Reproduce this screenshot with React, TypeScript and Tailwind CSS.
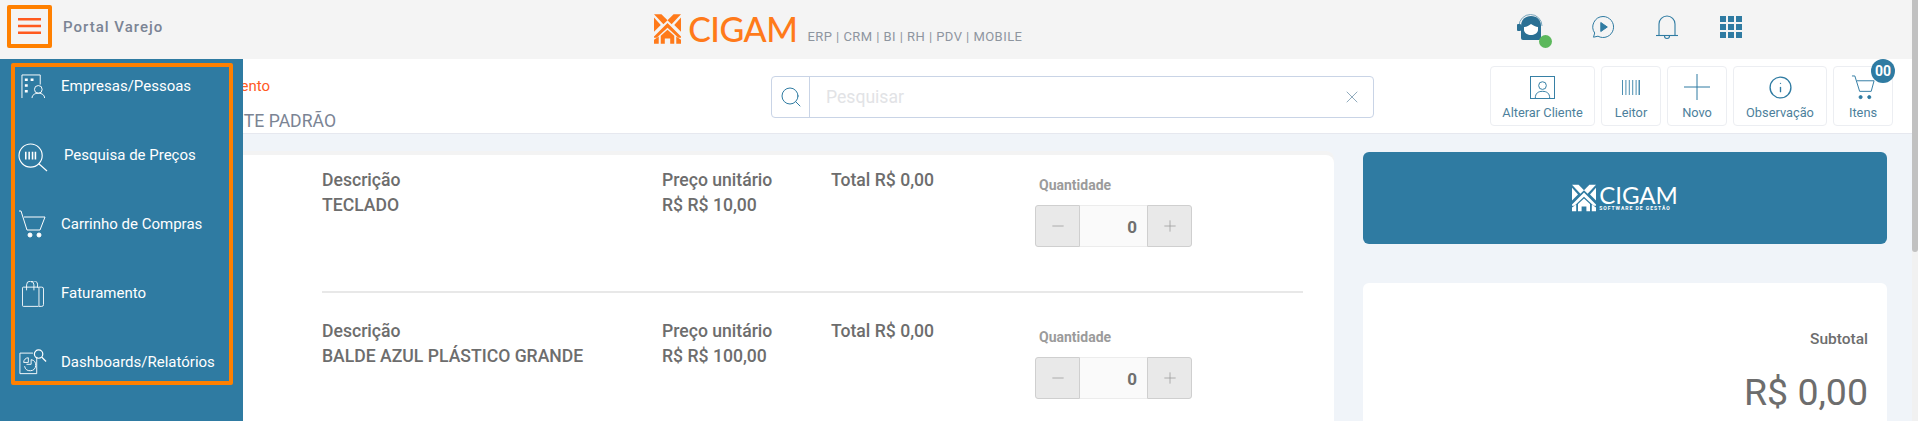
import { Info, Minus, Plus, Search, X } from 'lucide-react';

const font = 'font-["Roboto",sans-serif]';

function LogoMark({ color, className }: { color: string; className: string }) {
  return (
    <svg viewBox="0 0 40 44" className={className} fill={color}>
      <path d="M0 0h11l9 9-6 6z" />
      <path d="M40 0H29l-9 9 6 6z" />
      <path d="M0 5l10 11-10 10z" />
      <path d="M40 5L30 16l10 10z" />
      <path d="M20 13l20 20v2l-4 0L20 20 4 35H0v-2z" />
      <path d="M0 38l7-5v11H0z" />
      <path d="M40 38l-7-5v11h7z" />
      <path d="M10 32l10-9 10 9v12h-6v-8h-8v8h-6z" />
    </svg>
  );
}

function ToolButton({ label, w, icon }: { label: string; w: string; icon: React.ReactNode }) {
  return (
    <div className={`${w} h-[60px] shrink-0 rounded-[4px] border border-[#eceef2] bg-white flex flex-col items-center pt-[6px] text-[#2f7ba2]`}>
      <div className="h-[28px] flex items-center justify-center">{icon}</div>
      <span className="mt-[3px] text-[12.8px] leading-[18px] text-[#4d7f9c]">{label}</span>
    </div>
  );
}

function Stepper() {
  return (
    <div className="flex w-[157px] h-[42px]">
      <div className="w-[45px] rounded-l-[3px] border border-[#cfcfcf] bg-[#e9e9e9] flex items-center justify-center">
        <Minus size={18} strokeWidth={1} className="text-[#9a9a9a]" />
      </div>
      <div className="flex-1 border-y border-[#ececec] bg-[#fafafa] text-right pr-[10px] text-[17px] font-bold leading-[42px] text-[#6f6f6f]">0</div>
      <div className="w-[45px] rounded-r-[3px] border border-[#cfcfcf] bg-[#e9e9e9] flex items-center justify-center">
        <Plus size={18} strokeWidth={1} className="text-[#9a9a9a]" />
      </div>
    </div>
  );
}

function ProductRow({ name, price, first }: { name: string; price: string; first?: boolean }) {
  const textCls = 'text-[17.6px] font-medium leading-[25px] text-[#6d6d6d]';
  return (
    <div className={`flex ml-[322px] mr-[31px] ${first ? 'h-[138px] pt-[13px] border-b-2 border-[#e8e8e8]' : 'pt-[26px]'}`}>
      <div className={`w-[340px] ${textCls}`}>
        <div>Descrição</div>
        <div>{name}</div>
      </div>
      <div className={`w-[169px] ${textCls}`}>
        <div>Preço unitário</div>
        <div>{price}</div>
      </div>
      <div className={`w-[204px] ${textCls}`}>Total R$ 0,00</div>
      <div className={first ? '-mt-[1px]' : ''}>
        <div className="pl-[4px] pt-[10px] text-[14px] font-bold leading-[16px] text-[#9b9b9b]">Quantidade</div>
        <div className="mt-[12px]"><Stepper /></div>
      </div>
    </div>
  );
}

function MenuItem({ label, icon, shift }: { label: string; icon: React.ReactNode; shift?: boolean }) {
  return (
    <div className="flex items-center h-[69px] text-white">
      <div className="w-[36px] flex justify-center shrink-0">{icon}</div>
      <span className={`${shift ? 'ml-[13px]' : 'ml-[10px]'} text-[15px] leading-[20px]`}>{label}</span>
    </div>
  );
}

export default function App() {
  return (
    <div className={`relative h-[421px] w-[1918px] overflow-hidden bg-[#f0f4f9] ${font}`}>
      {/* top bar */}
      <header className="h-[59px] bg-[#f4f4f4] flex items-center relative">
        <div className="ml-[7px] mb-[7px] w-[45px] h-[43px] rounded-[2px] border-[4px] border-[#ff8000] flex items-center justify-center">
          <svg width="23" height="16" viewBox="0 0 23 16" stroke="#ff5a1f" strokeWidth="2.4"><path d="M0 1.2h23M0 8h23M0 14.8h23" /></svg>
        </div>
        <span className="ml-[11px] mb-[5px] text-[15px] font-medium tracking-[1px] text-[#7b8494]">Portal Varejo</span>

        <div className="ml-[491px] flex items-end mb-[2px]">
          <LogoMark color="#ff7a1a" className="w-[27px] h-[30px]" />
          <span className='ml-[7px] font-["Lato",sans-serif] text-[34px] leading-[30px] tracking-[-0.5px] font-medium text-[#ff7a1a]'>CIGAM</span>
          <span className="ml-[10px] text-[13px] leading-[15px] tracking-[0.45px] text-[#8e959f]">ERP | CRM | BI | RH | PDV | MOBILE</span>
        </div>

        <div className="ml-auto mr-[176px] flex items-center mb-[6px]">
          <div className="relative w-[30px] h-[28px]">
            <svg viewBox="0 0 30 28" className="w-[30px] h-[28px]">
              <path d="M3 13a11.5 11.5 0 0 1 23 0" fill="none" stroke="#7ba8bf" strokeWidth="1" />
              <path d="M5 13c0-6 4-10 10-10s10 4 10 10v12a2 2 0 0 1-2 2H7a2 2 0 0 1-2-2z" fill="#2a7094" />
              <path d="M8 14c3 0 5-2 7-3 2 1 5 3 7 3v3c0 3-4 5-7 5s-7-2-7-5z" fill="#fff" />
              <rect x="1" y="11" width="4" height="7" rx="1" fill="#2a7094" />
            </svg>
            <div className="absolute right-[-6px] bottom-[-7px] w-[13px] h-[13px] rounded-full bg-[#5cb85c]" />
          </div>
          <svg viewBox="0 0 24 24" className="ml-[45px] w-[24px] h-[24px]" fill="none" stroke="#2f7ba2" strokeWidth="1">
            <path d="M12 1.5a10.5 10.5 0 1 1-5 19.7l-4.5 1 1.2-4.2A10.5 10.5 0 0 1 12 1.5z" />
            <path d="M9.8 7.5l6.5 4.5-6.5 4.5z" fill="#2f7ba2" />
          </svg>
          <svg viewBox="0 0 24 26" className="ml-[40px] w-[24px] h-[26px]" fill="none" stroke="#2f7ba2" strokeWidth="1.1">
            <path d="M4 21V10a8 8 0 0 1 16 0v11" />
            <path d="M1 21.5h22" />
            <path d="M9.5 22a2.5 2.5 0 0 0 5 0" />
          </svg>
          <div className="ml-[41px] grid grid-cols-3 gap-[2px]">
            {Array.from({ length: 9 }).map((_, i) => (
              <div key={i} className="w-[6px] h-[6px] bg-[#2f7ba2]" />
            ))}
          </div>
        </div>
      </header>

      {/* customer / search / tools bar */}
      <div className="h-[75px] bg-white border-b border-[#e6e8ef] flex">
        <div className="w-[771px] shrink-0 pt-[18px]">
          <div className="text-[15px] leading-[18px] text-right pr-[501px] text-[#ff5a1f]">Atendimento</div>
          <div className="mt-[15px] text-right pr-[435px] text-[17.6px] leading-[22px] text-[#7b8494]">CLIENTE PADRÃO</div>
        </div>
        <div className="mt-[17px] w-[603px] h-[42px] rounded-[4px] border border-[#c9d4e6] flex items-center">
          <div className="w-[38px] h-full border-r border-[#c9d4e6] flex items-center justify-center">
            <Search size={24} strokeWidth={1} className="text-[#2f7ba2]" />
          </div>
          <span className="ml-[16px] text-[17.6px] text-[#e2e3e6]">Pesquisar</span>
          <X size={20} strokeWidth={1} className="ml-auto mr-[11px] text-[#7b9ab0]" />
        </div>
        <div className="ml-[116px] mt-[7px] flex gap-[6px]">
          <ToolButton label="Alterar Cliente" w="w-[105px]" icon={
            <svg viewBox="0 0 26 24" className="w-[25px] h-[23px]" fill="none" stroke="#2f7ba2" strokeWidth="1">
              <rect x="0.5" y="0.5" width="25" height="23" />
              <circle cx="13" cy="10" r="4" />
              <path d="M5.5 23c0-5 3-7 7.5-7s7.5 2 7.5 7" />
            </svg>
          } />
          <ToolButton label="Leitor" w="w-[60px]" icon={
            <svg viewBox="0 0 18 15" className="w-[18px] h-[15px]" fill="#4d8fb1">
              <path d="M0 0h1v15H0zM3.4 0h1v15h-1zM6.8 0h1v15h-1zM10.2 0h1v15h-1zM13.6 0h1v15h-1zM16.5 0h1.5v15h-1.5z" />
            </svg>
          } />
          <ToolButton label="Novo" w="w-[60px]" icon={
            <svg viewBox="0 0 26 26" className="w-[26px] h-[26px]" stroke="#2f7ba2" strokeWidth="1">
              <path d="M13 0v26M0 13h26" />
            </svg>
          } />
          <ToolButton label="Observação" w="w-[94px]" icon={<Info size={25} strokeWidth={1.3} />} />
          <div className="relative">
            <ToolButton label="Itens" w="w-[60px]" icon={
              <svg viewBox="0 0 26 26" className="w-[25px] h-[25px]" fill="none" stroke="#2f7ba2" strokeWidth="1">
                <path d="M1 1h3l5 16h12l3-11H6" />
                <circle cx="10" cy="23" r="1.6" fill="#2f7ba2" />
                <circle cx="19" cy="23" r="1.6" fill="#2f7ba2" />
              </svg>
            } />
            <div className="absolute right-[-2px] top-[-7px] w-[24px] h-[24px] rounded-full bg-[#2f7ba2] text-white text-[14px] font-bold leading-[24px] text-center">00</div>
          </div>
        </div>
      </div>

      {/* content */}
      <div className="flex pt-[21px]">
        <div className="w-[1334px] h-[400px] shrink-0 bg-white rounded-r-[8px] shadow-[0_-4px_0_#f3f3f3]">
          <ProductRow first name="TECLADO" price="R$ R$ 10,00" />
          <ProductRow name="BALDE AZUL PLÁSTICO GRANDE" price="R$ R$ 100,00" />
        </div>
        <div className="ml-[29px] w-[524px] -mt-[3px]">
          <div className="h-[92px] rounded-[6px] bg-[#2f7ba2] flex items-center justify-center">
            <LogoMark color="#fff" className="w-[24px] h-[28px]" />
            <div className="ml-[3px] text-white">
              <div className='font-["Lato",sans-serif] text-[24px] leading-[21px]'>CIGAM</div>
              <div className="text-[5px] leading-[7px] tracking-[1px] font-bold">SOFTWARE DE GESTÃO</div>
            </div>
          </div>
          <div className="mt-[39px] h-[200px] rounded-[6px] bg-white pr-[19px] text-right text-[#6d6d6d]">
            <div className="pt-[47px] text-[15.5px] font-medium leading-[18px]">Subtotal</div>
            <div className="mt-[23px] text-[37.5px] leading-[42px]">R$ 0,00</div>
          </div>
        </div>
      </div>

      {/* sidebar lies over the page */}
      <aside className="absolute left-0 top-[59px] bottom-0 w-[243px] bg-[#2f7ba2] pt-[4px] pl-[11px]">
        <div className="w-[222px] h-[322px] rounded-[2px] border-[4px] border-[#ff8000] overflow-hidden">
          <div className="-mt-[16px]">
          <MenuItem label="Empresas/Pessoas" icon={
            <svg viewBox="0 0 26 26" className="w-[25px] h-[25px] mt-[1px]" fill="none" stroke="#fff" strokeWidth="1">
              <path d="M1 25V1h19v10M1 25" />
              <path d="M4 6h3M4 12h3M4 18h3M10 6h3" strokeWidth="2.6" />
              <circle cx="18" cy="16" r="4" />
              <path d="M11.5 25c0-3 2.5-5 6.5-5s6.5 2 6.5 5" />
            </svg>
          } />
          <MenuItem shift label="Pesquisa de Preços" icon={
            <svg viewBox="0 0 32 30" className="w-[31px] h-[29px] mt-[6px]" fill="none" stroke="#fff" strokeWidth="1.2">
              <circle cx="13" cy="13" r="12" />
              <path d="M21.5 21.5L30 29" />
              <path d="M8 9v8M11.5 9v8M15 9v8M18 9v8" strokeWidth="1.6" />
            </svg>
          } />
          <MenuItem label="Carrinho de Compras" icon={
            <svg viewBox="0 0 28 28" className="w-[28px] h-[28px]" fill="none" stroke="#fff" strokeWidth="1">
              <path d="M0 1h2l6 19h13l5-13H5" />
              <circle cx="11" cy="25" r="2" fill="#fff" />
              <circle cx="20" cy="25" r="2" fill="#fff" />
            </svg>
          } />
          <MenuItem label="Faturamento" icon={
            <svg viewBox="0 0 24 28" className="w-[22px] h-[26px] mt-[3px]" fill="none" stroke="#fff" strokeWidth="1">
              <rect x="0.5" y="6.5" width="18" height="21" rx="1" />
              <path d="M18.5 6.5h3a2 2 0 0 1 2 2v17a2 2 0 0 1-2 2h-3" />
              <path d="M5 10V4a4 4 0 0 1 8 0v6M10 1a4 4 0 0 1 7 3v3" />
            </svg>
          } />
          <MenuItem label="Dashboards/Relatórios" icon={
            <svg viewBox="0 0 30 28" className="w-[28px] h-[27px]" fill="none" stroke="#fff" strokeWidth="1">
              <path d="M19 9V27H1V5h14" />
              <circle cx="21" cy="6" r="4.5" strokeWidth="1.3" />
              <path d="M24.5 9.5L29 14" strokeWidth="1.3" />
              <path d="M5 15a5 5 0 0 1 5-5v5z" />
              <path d="M8 17h5v-5a6 6 0 1 1-7 7" />
            </svg>
          } />
          </div>
        </div>
      </aside>

      {/* scrollbar */}
      <div className="absolute right-0 top-0 bottom-0 w-[6px] bg-[#f1f1f1]">
        <div className="h-[252px] rounded-b-[3px] bg-[#c1c1c1]" />
      </div>
    </div>
  );
}
